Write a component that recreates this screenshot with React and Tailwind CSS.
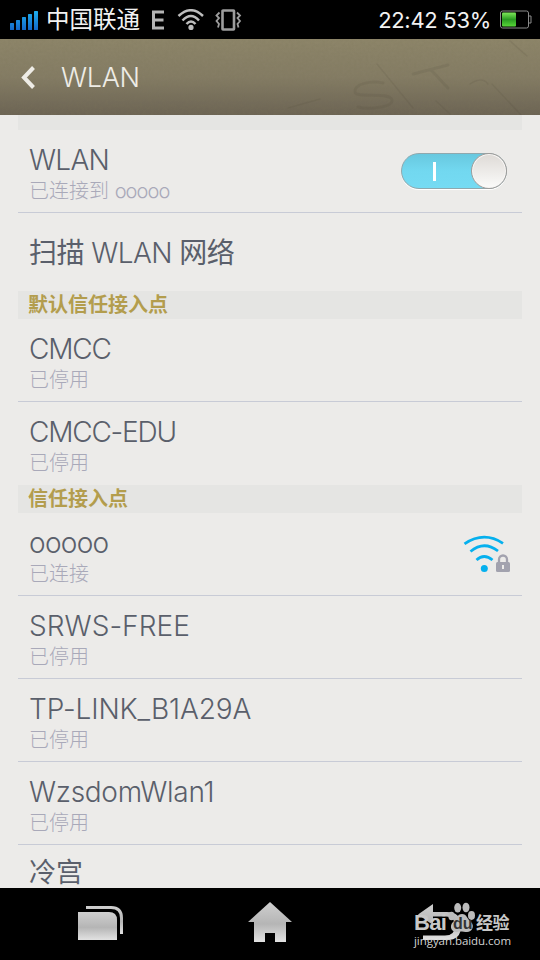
import React from "react";

const SANS = "font-['Inter','Noto_Sans_CJK_SC',sans-serif]";

const trusted = [
  { name: "ooooo", status: "已连接", connected: true, spacing: "tracking-[-0.7px]" },
  { name: "SRWS-FREE", status: "已停用", spacing: "tracking-[0.05px]" },
  { name: "TP-LINK_B1A29A", status: "已停用", spacing: "tracking-[-0.1px]" },
  { name: "WzsdomWlan1", status: "已停用", spacing: "tracking-[-0.3px]" },
];

const StatusBar = () => (
  <div className="h-[39px] shrink-0 bg-black flex items-center pl-[10px] pr-[8px] text-[#f2f2f2]">
    <svg width="28" height="20" viewBox="0 0 28 20">
      <defs>
        <linearGradient id="signal" gradientUnits="userSpaceOnUse" x1="0" y1="0" x2="0" y2="20">
          <stop offset="0" stopColor="#1fb4f2" />
          <stop offset="1" stopColor="#1468c8" />
        </linearGradient>
      </defs>
      <g fill="url(#signal)">
        <rect x="0" y="13" width="4" height="7" rx="0.6" />
        <rect x="6" y="10" width="4" height="10" rx="0.6" />
        <rect x="12" y="7" width="4" height="13" rx="0.6" />
        <rect x="18" y="4" width="4" height="16" rx="0.6" />
        <rect x="24" y="1" width="4" height="19" rx="0.6" />
      </g>
    </svg>
    <span className="ml-[8px] w-[96px] text-[23.500px] leading-[39px] whitespace-nowrap">中国联通</span>
    <svg className="ml-[9px]" width="14" height="20" viewBox="0 0 14 20">
      <path d="M13 2H2.500v16H13M2 10h10.500" fill="none" stroke="#b4b4b4" strokeWidth="3" />
    </svg>
    <svg className="ml-[12px]" width="28" height="22" viewBox="0 0 28 22">
      <g fill="none" stroke="#bdbdbd" strokeWidth="2.500">
        <path d="M1.500 7Q14-4.500 26 7" />
        <path d="M5.500 11.500Q14 2.500 22 11.500" />
        <path d="M9.500 15Q14 10 18.500 15" />
      </g>
      <circle cx="14" cy="18.400" r="2.600" fill="#bdbdbd" />
    </svg>
    <svg className="ml-[10px]" width="28" height="22" viewBox="0 0 28 22">
      <g fill="none" stroke="#9d9d9d">
        <rect x="7.500" y="1.500" width="11.500" height="19" rx="0.5" strokeWidth="2.600" />
        <path d="M4.500 3.500L1.500 6.500l2.500 2.500-2.500 3 2.500 3-1 3.500M22 3.500l3 3-2.500 2.500 2.500 3-2.500 3 1 3.500" strokeWidth="1.800" />
      </g>
    </svg>
    <span className="ml-auto pt-[2px] text-[22px] leading-[37px] tracking-[-0.3px] whitespace-nowrap">22:42 53%</span>
    <svg className="ml-[9px]" width="32" height="19" viewBox="0 0 32 19">
      <defs>
        <linearGradient id="charge" x1="0" y1="0" x2="0" y2="1">
          <stop offset="0" stopColor="#7ee85a" />
          <stop offset="0.5" stopColor="#2a9a22" />
          <stop offset="1" stopColor="#58d838" />
        </linearGradient>
      </defs>
      <rect x="0.5" y="1" width="28" height="17" rx="2" fill="none" stroke="#8c8c8c" />
      <path d="M28.500 6h2.500v7h-2.500" fill="none" stroke="#8c8c8c" />
      <rect x="2" y="2.500" width="14" height="14" rx="1" fill="url(#charge)" />
    </svg>
  </div>
);

const Header = () => (
  <header className="relative h-[76px] shrink-0 flex items-center overflow-hidden bg-gradient-to-b from-[#8d8569] via-[#847c64] to-[#6c6454]">
    {/* paper grain */}
    <svg className="absolute inset-0" width="540" height="76">
      <filter id="grain">
        <feTurbulence type="fractalNoise" baseFrequency="0.35" numOctaves="2" seed="4" />
        <feColorMatrix values="0 0 0 0 0.2  0 0 0 0 0.18  0 0 0 0 0.1  0.5 0 0 0 -0.16" />
      </filter>
      <rect width="540" height="76" filter="url(#grain)" opacity="0.7" />
      <g fill="none" stroke="#4f4938" strokeLinecap="round" opacity="0.13">
        <path d="M383 44c-12-3-29 1-28 9 1 7 35-1 37 8 1 7-22 10-34 7" strokeWidth="3" />
        <path d="M413 35l35-9M431 31l17 18" strokeWidth="3" />
        <path d="M377 25l36 44M288 69l32-9M436 62l14 13M492 45l29 31M470 45q12-8 18 0M510 2l17 15" strokeWidth="1.500" />
      </g>
    </svg>
    <svg className="relative ml-[20px]" width="18" height="24" viewBox="0 0 18 24">
      <path d="M13.500 2.500L4 12.500l9.500 10" fill="none" stroke="#eeece6" strokeWidth="4" />
    </svg>
    <h1 className="relative ml-[23px] pt-[2px] text-[27px] leading-[74px] font-light tracking-[-0.3px] text-[#eeece6]">WLAN</h1>
  </header>
);

const Section = ({ title }) => (
  <div className="mx-[18px] h-[28px] shrink-0 bg-[#e5e5e3] pl-[10px] pt-px text-[20px] leading-[27px] font-bold text-[#b39d4d]">
    {title}
  </div>
);

const Row = ({ name, status, spacing, last, children }) => (
  <div
    className={`mx-[18px] h-[83px] shrink-0 pl-[11px] flex items-center justify-between border-b ${
      last ? "border-transparent" : "border-[#c8cbd6]"
    }`}
  >
    <div className="h-full pt-[13px]">
      <div className={`h-[34px] text-[28px] leading-[34px] font-light text-[#5a5f6b] whitespace-nowrap ${spacing}`}>
        {name}
      </div>
      <div className="h-[28px] text-[20px] leading-[28px] font-light text-[#a9a9b9] whitespace-nowrap">
        {status}
      </div>
    </div>
    {children}
  </div>
);

const Toggle = () => (
  <div className="mr-[15px] w-[106px] h-[36px] rounded-full border border-[#8fa8ae] bg-gradient-to-b from-[#68c8df] via-[#72d8f0] to-[#75dbf3] shadow-[0_1px_0_#ffffff] flex items-center justify-between">
    <div className="ml-[31px] w-[3px] h-[19px] bg-white" />
    <div className="w-[36px] h-[36px] -mr-px rounded-full border border-[#a09d9b] bg-gradient-to-b from-[#dedad6] to-[#fbfbfa] shadow-[inset_0_0_0_1px_#f7f6f5]" />
  </div>
);

const WifiLocked = () => (
  <svg className="mr-[11px]" width="48" height="40" viewBox="0 0 48 40">
    <g fill="none" stroke="#05b0ee" strokeWidth="2.800">
      <path d="M1.500 9.800Q21-3.300 40 9.300" />
      <path d="M7.500 17.500Q21 6.300 35 17" />
      <path d="M13.500 26Q21 19 29.500 26" />
    </g>
    <circle cx="21.300" cy="34.500" r="3.500" fill="#05b0ee" />
    <path d="M36 29v-3.500a4 4 0 0 1 8 0V29" fill="none" stroke="#a2a2ae" strokeWidth="2.300" />
    <rect x="33" y="28" width="14" height="10" rx="1.500" fill="#a2a2ae" />
    <rect x="39" y="31" width="2" height="4" fill="#ecebe9" />
  </svg>
);

const NavBar = () => (
  <nav className="relative h-[72px] shrink-0 bg-black">
    <svg className="block" width="540" height="72" viewBox="0 0 540 72">
      <defs>
        <linearGradient id="metal" x1="0" y1="0" x2="0" y2="1">
          <stop offset="0" stopColor="#cfcfcf" />
          <stop offset="0.55" stopColor="#b5b5b5" />
          <stop offset="1" stopColor="#e2e2e2" />
        </linearGradient>
      </defs>
      <g fill="url(#metal)">
        <path d="M78 24h31q8 0 8 8v20H78z" />
        <path d="M86 18h25q12 0 12 12v16h-3V30q0-9-9-9H86z" />
        <path d="M270 14l22 20h-6v20h-11v-9h-10v9h-11V34h-6z" />
        <path d="M418 26.500L433 16v8h14q14 0 14 14t-14 14h-24v-4.500h22q10 0 10-9.500t-9-9.500h-13v8.500z" />
      </g>
    </svg>
    {/* watermark over the back key */}
    <div className="absolute left-[414px] top-[14px] w-[98px] h-[48px] text-[#c8c8c8] font-['Liberation_Sans','Noto_Sans_CJK_SC',sans-serif]">
      <div className="absolute left-0 top-[12px] text-[22px] leading-[18px] font-bold tracking-[-0.7px]">Bai</div>
      <svg className="absolute left-[34px] top-0" width="28" height="32" viewBox="0 0 28 32">
        <g fill="#bcbcbc">
          <ellipse cx="3.500" cy="14" rx="3.200" ry="4.200" />
          <ellipse cx="9.700" cy="5.800" rx="3.500" ry="4.800" />
          <ellipse cx="18" cy="5.500" rx="3.500" ry="4.800" />
          <ellipse cx="23.500" cy="13.500" rx="3.500" ry="4.400" />
          <path d="M14 12c5 0 5 5 9 8 4 4 1 10-4 10-3 0-7-1-10 0-6 0-8-6-4-10 4-3 4-8 9-8z" />
        </g>
      </svg>
      <div className="absolute left-[39px] top-[14px] text-[16px] leading-[16px] font-bold text-[#333333]">du</div>
      <div className="absolute left-[62px] top-[13px] text-[17px] leading-[18px] font-bold tracking-[-0.5px] whitespace-nowrap">经验</div>
      <div className="absolute left-0 top-[31px] text-[11.500px] leading-[15px] font-medium tracking-[-0.05px] text-[#d4d4d4] font-['Open_Sans'] whitespace-nowrap">jingyan.baidu.com</div>
    </div>
  </nav>
);

const App = () => {
  return (
    <div className={`w-[540px] h-[960px] flex flex-col overflow-hidden bg-[#ecebe9] ${SANS}`}>
      <StatusBar />
      <Header />
      <main className="flex-1 min-h-0 overflow-hidden flex flex-col">
        <div className="mx-[18px] h-[15px] shrink-0 bg-[#e5e5e3]" />
        <Row
          name="WLAN"
          status={
            <>
              已连接到 <span className="tracking-[-0.9px]">ooooo</span>
            </>
          }
          spacing="tracking-[-0.7px]"
        >
          <Toggle />
        </Row>
        <div className="ml-[29px] h-[78px] pt-[2px] shrink-0 text-[28px] leading-[76px] tracking-[-0.55px] text-[#5a5f6b] whitespace-nowrap">
          扫描 <span className="font-light">WLAN</span> 网络
        </div>
        <Section title="默认信任接入点" />
        <Row name="CMCC" status="已停用" spacing="tracking-[-1.2px]" />
        <Row name="CMCC-EDU" status="已停用" spacing="tracking-[-1.2px]" last />
        <Section title="信任接入点" />
        {trusted.map((ap) => (
          <Row key={ap.name} name={ap.name} status={ap.status} spacing={ap.spacing}>
            {ap.connected && <WifiLocked />}
          </Row>
        ))}
        {/* only the top of this row is visible above the nav bar */}
        <div className="mx-[18px] h-[43px] pl-[11px] pt-[8px] shrink-0 text-[27px] text-[#5a5f6b]">
          <div className="leading-[40px]">冷宫</div>
        </div>
      </main>
      <NavBar />
    </div>
  );
};

export default App;
